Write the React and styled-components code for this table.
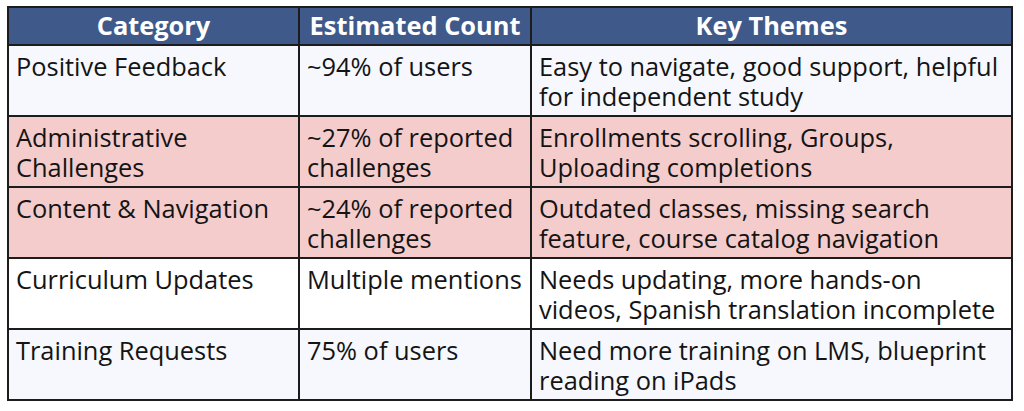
import React from 'react';
import styled, { createGlobalStyle } from 'styled-components';

const GlobalStyle = createGlobalStyle`
  html, body {
    margin: 0;
    padding: 0;
    background: #ffffff;
  }
  body {
    font-family: 'Open Sans', 'Noto Sans', sans-serif;
  }
`;

const Page = styled.div`
  padding: 6px 0 0 7px;
`;

const Table = styled.table`
  width: 1006px;
  border-collapse: collapse;
  table-layout: fixed;
  border: 2px solid #1c1c1c;
  font-size: 25.4px;
  line-height: 30px;
  color: #141414;
`;

const HeadCell = styled.th`
  background: #3f5a8a;
  color: #ffffff;
  font-weight: 700;
  text-align: center;
  padding: 2px 2px 4px;
  border: 2px solid #1c1c1c;
  white-space: nowrap;
`;

const ROW_COLOURS = {
  light: '#f6f8fd',
  alert: '#f4cccc',
  plain: '#ffffff',
};

const Row = styled.tr`
  background: ${props => ROW_COLOURS[props.tone]};
`;

const Cell = styled.td`
  vertical-align: top;
  padding: 5px 2px 4px 7px;
  height: 60px;
  border: 2px solid #1c1c1c;
`;

const rows = [
  {
    category: 'Positive Feedback',
    count: '~94% of users',
    themes: 'Easy to navigate, good support, helpful for independent study',
    tone: 'light',
  },
  {
    category: 'Administrative Challenges',
    count: '~27% of reported challenges',
    themes: 'Enrollments scrolling, Groups, Uploading completions',
    tone: 'alert',
  },
  {
    category: 'Content & Navigation',
    count: '~24% of reported challenges',
    themes: 'Outdated classes, missing search feature, course catalog navigation',
    tone: 'alert',
  },
  {
    category: 'Curriculum Updates',
    count: 'Multiple mentions',
    themes: 'Needs updating, more hands-on videos, Spanish translation incomplete',
    tone: 'plain',
  },
  {
    category: 'Training Requests',
    count: '75% of users',
    themes: 'Need more training on LMS, blueprint reading on iPads',
    tone: 'light',
  },
];

export default function App() {
  return (
    <Page>
      <GlobalStyle />
      <Table>
        <colgroup>
          <col style={{ width: 291 }} />
          <col style={{ width: 232 }} />
          <col />
        </colgroup>
        <thead>
          <tr>
            <HeadCell>Category</HeadCell>
            <HeadCell>Estimated Count</HeadCell>
            <HeadCell>Key Themes</HeadCell>
          </tr>
        </thead>
        <tbody>
          {rows.map(row => (
            <Row key={row.category} tone={row.tone}>
              <Cell>{row.category}</Cell>
              <Cell>{row.count}</Cell>
              <Cell>{row.themes}</Cell>
            </Row>
          ))}
        </tbody>
      </Table>
    </Page>
  );
}
